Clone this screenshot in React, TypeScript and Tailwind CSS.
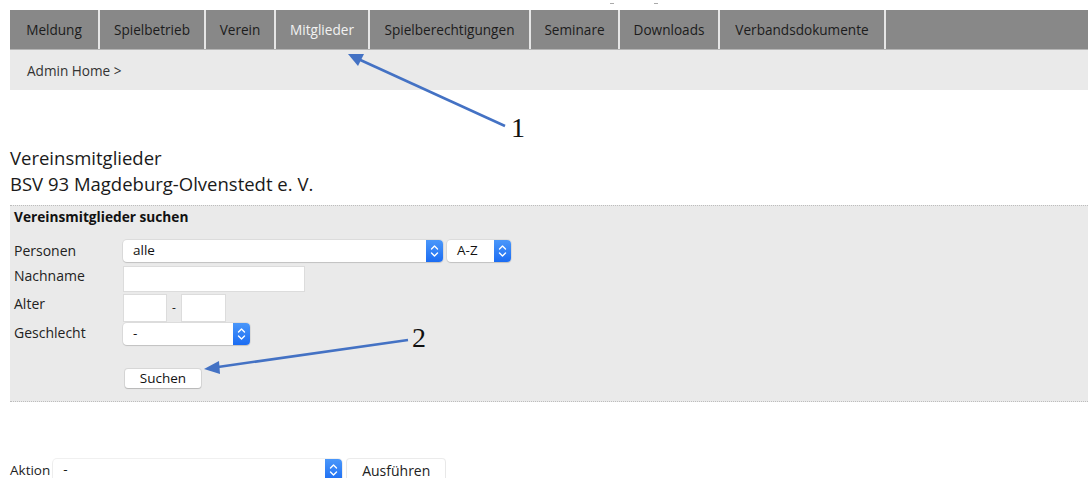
import React from "react";

const tabs = [
  { label: "Meldung", w: "w-[90px]" },
  { label: "Spielbetrieb", w: "w-[106px]" },
  { label: "Verein", w: "w-[70px]" },
  { label: "Mitglieder", w: "w-[94px]" },
  { label: "Spielberechtigungen", w: "w-[161px]" },
  { label: "Seminare", w: "w-[89px]" },
  { label: "Downloads", w: "w-[100px]" },
  { label: "Verbandsdokumente", w: "w-[166px]" },
];

// blue up/down stepper used by the native-looking selects
const Stepper = () => (
  <div className="flex h-full w-[17px] items-center justify-center rounded-r-[4px] bg-gradient-to-b from-[#4a97fa] to-[#1b6cf2]">
    <svg width="9" height="14" viewBox="0 0 9 14" fill="none">
      <path d="M1.5 5 L4.5 2 L7.5 5" stroke="white" strokeWidth="1.4" strokeLinecap="round" strokeLinejoin="round" />
      <path d="M1.5 9 L4.5 12 L7.5 9" stroke="white" strokeWidth="1.4" strokeLinecap="round" strokeLinejoin="round" />
    </svg>
  </div>
);

const Select = ({ value, className }: { value: string; className: string }) => (
  <div className={"flex h-[22px] items-center rounded-[4px] bg-white shadow-[0_0_0_1px_rgba(0,0,0,0.06),0_1px_1px_rgba(0,0,0,0.12)] " + className}>
    <span className="flex-1 pl-[10px] text-[13.5px] leading-none text-[#111]">{value}</span>
    <Stepper />
  </div>
);

const Label = ({ children }: { children: React.ReactNode }) => (
  <div className="w-[109px] shrink-0 text-[14px] leading-[20px] text-[#222]">{children}</div>
);

export default function App() {
  return (
    <div className="relative h-[478px] w-[1088px] overflow-hidden bg-white font-['Open_Sans',sans-serif] text-[#222]">
      <div className="flex h-[10px] justify-center gap-[40px] pl-[180px]">
        <span className="mt-[3px] h-px w-[4px] bg-[#aaa]" />
        <span className="mt-[3px] h-px w-[4px] bg-[#aaa]" />
      </div>

      <div className="pl-[10px]">
        {/* main navigation */}
        <nav className="flex h-[40px] border-b border-[#b5b5b5] bg-[#888888]">
          {tabs.map((t) => (
            <div
              key={t.label}
              className={
                "flex shrink-0 items-center justify-center border-r-2 border-[#e6e6e6] pt-[2px] text-[13.6px] " +
                t.w +
                (t.label === "Mitglieder" ? " text-[#f2f2f2]" : " text-[#1c1c1c]")
              }
            >
              {t.label}
            </div>
          ))}
        </nav>

        {/* breadcrumb */}
        <div className="flex h-[40px] items-center bg-[#eaeaea] pl-[17px] pt-[2px] text-[13.6px] text-[#333]">
          Admin Home &gt;
        </div>

        <div className="mt-[55px] text-[18.5px] leading-[26px] text-[#1a1a1a]">
          <div>Vereinsmitglieder</div>
          <div>BSV 93 Magdeburg-Olvenstedt e. V.</div>
        </div>

        {/* search panel */}
        <div className="mt-[8px] h-[197px] border-y border-dotted border-[#bdbdbd] bg-[#eaeaea] px-[4px] pt-[1px]">
          <div className="text-[13.7px] font-bold leading-[20px] text-[#111]">Vereinsmitglieder suchen</div>

          <div className="mt-[13px] flex items-center">
            <Label>Personen</Label>
            <Select value="alle" className="w-[320px]" />
            <Select value="A-Z" className="ml-[4px] w-[64px]" />
          </div>

          <div className="mt-[4px] flex items-start">
            <Label>Nachname</Label>
            <div className="h-[26px] w-[182px] border border-[#dcdcdc] bg-white" />
          </div>

          <div className="mt-[2px] flex items-start">
            <Label>Alter</Label>
            <div className="h-[28px] w-[44px] border border-[#dcdcdc] bg-white" />
            <span className="mx-[5px] mt-[8px] text-[12px] leading-none">-</span>
            <div className="h-[28px] w-[45px] border border-[#dcdcdc] bg-white" />
          </div>

          <div className="mt-[1px] flex items-start">
            <Label>Geschlecht</Label>
            <Select value="-" className="w-[127px]" />
          </div>

          <div className="mt-[24px] pl-[111px]">
            <div className="flex h-[19px] w-[76px] items-center justify-center rounded-[3px] bg-white text-[13.5px] text-[#111] shadow-[0_0_0_1px_rgba(0,0,0,0.08),0_1px_1px_rgba(0,0,0,0.15)]">
              Suchen
            </div>
          </div>
        </div>

        {/* bulk action */}
        <div className="mt-[57px] flex items-center">
          <span className="mr-[3px] text-[13.5px]">Aktion</span>
          <Select value="-" className="w-[289px]" />
          <div className="ml-[5px] flex h-[22px] w-[98px] items-center justify-center rounded-[3px] bg-white text-[14px] shadow-[0_0_0_1px_rgba(0,0,0,0.08),0_1px_1px_rgba(0,0,0,0.15)]">
            Ausführen
          </div>
        </div>
      </div>

      {/* annotation arrows */}
      <svg className="pointer-events-none absolute left-0 top-0" width="1088" height="478">
        <line x1="505" y1="126" x2="356" y2="58" stroke="#4472c4" strokeWidth="2.5" />
        <path d="M348 54 L364 54 L358 66 Z" fill="#4472c4" />
        <line x1="408" y1="340" x2="218" y2="367" stroke="#4472c4" strokeWidth="2.5" />
        <path d="M204 369 L219 361 L220 374 Z" fill="#4472c4" />
        <text x="511" y="137" fontFamily="'Liberation Serif', serif" fontSize="28" fill="#111">1</text>
        <text x="412" y="347" fontFamily="'Liberation Serif', serif" fontSize="28" fill="#111">2</text>
      </svg>
    </div>
  );
}
